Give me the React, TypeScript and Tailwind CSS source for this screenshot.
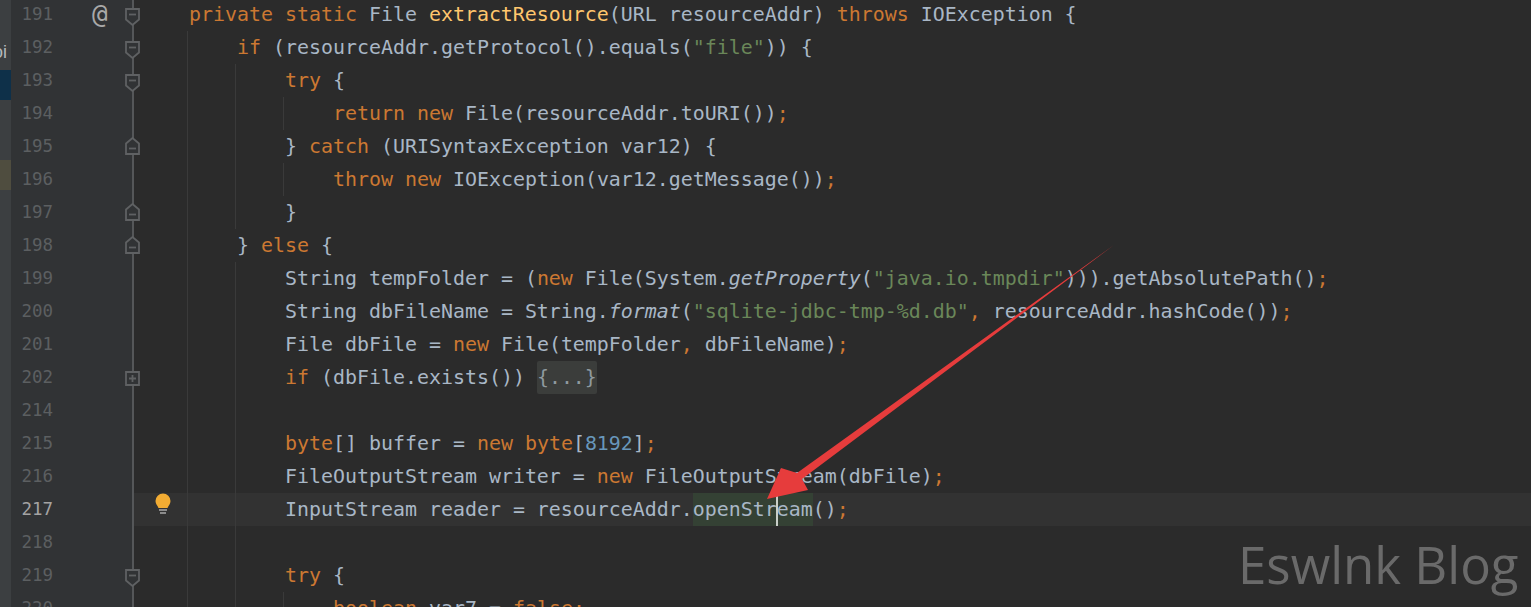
import type { ReactNode } from 'react';

type Tok = [string, string?];
type Line = { n: number; indent: number; toks: Tok[]; fold?: 'open' | 'close' | 'plus'; at?: boolean; active?: boolean };

const K = 'text-[#cc7832]';
const M = 'text-[#ffc66d]';
const S = 'text-[#6a8759]';
const N = 'text-[#6897bb]';
const I = 'italic';

const LINES: Line[] = [
  { n: 191, indent: 0, fold: 'open', at: true, toks: [['private static ', K], ['File '], ['extractResource', M], ['(URL resourceAddr) '], ['throws ', K], ['IOException {']] },
  { n: 192, indent: 1, fold: 'open', toks: [['if ', K], ['(resourceAddr.getProtocol().equals('], ['"file"', S], [')) {']] },
  { n: 193, indent: 2, fold: 'open', toks: [['try ', K], ['{']] },
  { n: 194, indent: 3, toks: [['return new ', K], ['File(resourceAddr.toURI())'], [';', K]] },
  { n: 195, indent: 2, fold: 'close', toks: [['} '], ['catch ', K], ['(URISyntaxException var12) {']] },
  { n: 196, indent: 3, toks: [['throw new ', K], ['IOException(var12.getMessage())'], [';', K]] },
  { n: 197, indent: 2, fold: 'close', toks: [['}']] },
  { n: 198, indent: 1, fold: 'close', toks: [['} '], ['else ', K], ['{']] },
  { n: 199, indent: 2, toks: [['String tempFolder = ('], ['new ', K], ['File(System.'], ['getProperty', I], ['('], ['"java.io.tmpdir"', S], ['))).getAbsolutePath()'], [';', K]] },
  { n: 200, indent: 2, toks: [['String dbFileName = String.'], ['format', I], ['('], ['"sqlite-jdbc-tmp-%d.db"', S], [', ', K], ['resourceAddr.hashCode())'], [';', K]] },
  { n: 201, indent: 2, toks: [['File dbFile = '], ['new ', K], ['File(tempFolder'], [', ', K], ['dbFileName)'], [';', K]] },
  { n: 202, indent: 2, fold: 'plus', toks: [['if ', K], ['(dbFile.exists()) ']] },
  { n: 214, indent: 2, toks: [] },
  { n: 215, indent: 2, toks: [['byte', K], ['[] buffer = '], ['new byte', K], ['['], ['8192', N], [']'], [';', K]] },
  { n: 216, indent: 2, toks: [['FileOutputStream writer = '], ['new ', K], ['FileOutputStream(dbFile)'], [';', K]] },
  { n: 217, indent: 2, active: true, toks: [['InputStream reader = resourceAddr.'], ['openStream', 'bg-[#344134]'], ['()'], [';', K]] },
  { n: 218, indent: 2, toks: [] },
  { n: 219, indent: 2, fold: 'open', toks: [['try ', K], ['{']] },
  { n: 220, indent: 3, toks: [['boolean ', K], ['var7 = '], ['false', K], [';', K]] },
];

function FoldIcon({ kind }: { kind: 'open' | 'close' | 'plus' }) {
  const c = '#5f6163';
  const top = kind === 'open' ? 'top-[10px]' : kind === 'close' ? 'top-[7px]' : 'top-[9px]';
  return (
    <svg width="15" height="18" viewBox="0 0 15 18" className={`absolute right-[-8px] ${top}`} fill="#313335" stroke={c} strokeWidth="1.8">
      {kind === 'open' && <path d="M1 1h13v10.500l-6.500 5.500-6.500-5.500z" />}
      {kind === 'close' && <path d="M1 17h13V6.500L7.500 1 1 6.500z" />}
      {kind === 'plus' && <path d="M1 2h13v13H1z" />}
      {kind === 'open' && <path d="M4 6.500h7" />}
      {kind === 'close' && <path d="M4 11.500h7" />}
      {kind === 'plus' && <path d="M4 8.500h7M7.500 5v7" />}
    </svg>
  );
}

function Bulb() {
  return (
    <svg width="16" height="22" viewBox="0 0 16 22">
      <path d="M8 0.500a7.500 7.500 0 0 1 7.500 7.500c0 3-2 4.500-3 7h-9c-1-2.500-3-4-3-7A7.500 7.500 0 0 1 8 0.500z" fill="#f2ac33" />
      <path d="M4 17h8M5 20h6" stroke="#a9a9a9" strokeWidth="1.600" />
    </svg>
  );
}

function Row({ line }: { line: Line }) {
  const guides: ReactNode[] = [];
  for (let i = 0; i < line.indent; i++) {
    guides.push(<span key={i} className="h-full w-[48px] shrink-0 border-l border-[#3a3a3a]" />);
  }
  return (
    <div className="flex h-[33px]">
      <div className="relative flex w-[121px] shrink-0 items-center bg-[#313335]">
        <span className={`w-[42px] text-right text-[17.500px] ${line.active ? 'text-[#a4a3a3]' : 'text-[#5c5f61]'}`}>{line.n}</span>
        {line.at && <span className="ml-[39px] font-['DejaVu_Sans_Mono',monospace] text-[26px] leading-[33px] text-[#a9a9a9]">@</span>}
        {line.fold && <FoldIcon kind={line.fold} />}
      </div>
      <div className="w-[2px] shrink-0 bg-[#555759]" />
      <div className={`flex min-w-0 flex-1 items-center ${line.active ? 'bg-[#323232]' : ''}`}>
        <div className="flex h-[33px] w-[53px] shrink-0 items-start justify-center pl-[4px]">{line.active && <Bulb />}</div>
        {guides}
        <span className="relative ml-[2px] flex h-[33px] items-center whitespace-pre text-[19.930px] text-[#a9b7c6]">
          {line.toks.map((t, i) => (
            <span key={i} className={`flex h-[33px] items-center ${t[1] ?? ''}`}>{t[0]}</span>
          ))}
          {line.n === 202 && <span className="rounded-[2px] bg-[#3b3d3b] leading-[33px] text-[#8f9a9f]">{'{...}'}</span>}
          {line.active && <span className="absolute left-[491px] top-0 h-[33px] w-[2px] bg-[#c9cfc9]" />}
        </span>
      </div>
    </div>
  );
}

export default function App() {
  return (
    <div className="relative flex h-[607px] w-[1531px] overflow-hidden bg-[#2b2b2b] font-['DejaVu_Sans_Mono',monospace]">
      <div className="flex w-[11px] shrink-0 flex-col bg-[#3c3f41] font-['Liberation_Sans',sans-serif]">
        <div className="flex h-[70px] items-end overflow-hidden whitespace-nowrap pb-[4px] text-[18px] text-[#b4b8ba]">
          <span className="ml-[-7px]">oi</span>
        </div>
        <div className="h-[30px] bg-[#0e3049]" />
        <div className="h-[60px]" />
        <div className="h-[30px] bg-[#4f4d3f]" />
      </div>
      <div className="mt-[-2px] flex min-w-0 flex-1 flex-col">
        {LINES.map((l) => (
          <Row key={l.n} line={l} />
        ))}
      </div>
      <svg className="pointer-events-none absolute left-0 top-0" width="1531" height="607">
        <path d="M1114 245L802 479 808 490 767 499 781 468 797 473z" fill="#e63c3c" />
      </svg>
      <div className="pointer-events-none absolute left-[1238px] top-[526px] font-['Open_Sans',sans-serif] text-[51px] leading-[76px] text-[#6a6a6a]">
        Eswlnk Blog
      </div>
    </div>
  );
}
